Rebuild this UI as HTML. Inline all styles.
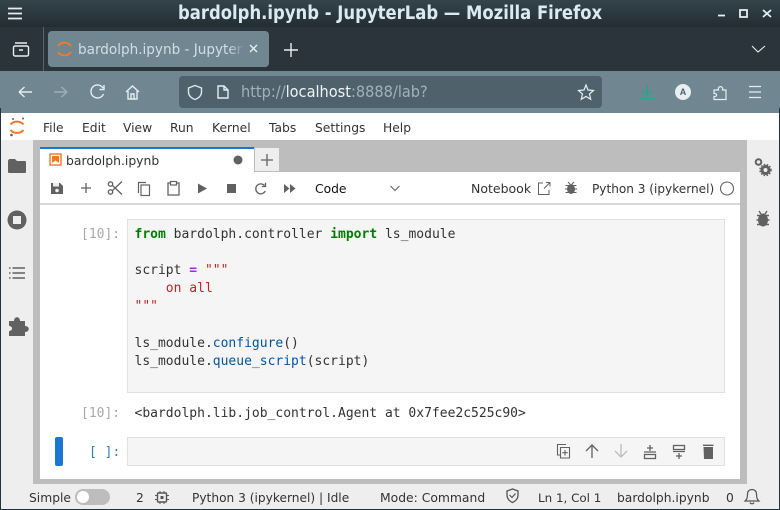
<!DOCTYPE html>
<html><head><meta charset="utf-8"><style>
html,body{margin:0;padding:0}
body{width:780px;height:510px;position:relative;overflow:hidden;background:#fff;font-family:"Liberation Sans",sans-serif}
.a{position:absolute}
.t{position:absolute;white-space:pre;line-height:18px}
.m{font-family:"DejaVu Sans Mono","Liberation Mono",monospace;font-size:13px;color:#333}
.u{font-size:12.3px;color:#333;font-family:"DejaVu Sans",sans-serif;transform-origin:0 50%}
svg{position:absolute;overflow:visible}
</style></head><body>
<div class="a" style="left:0;top:0;width:780px;height:27px;background:linear-gradient(#35434b,#232d33)"></div>
<div class="a" style="left:0;top:27px;width:780px;height:44px;background:#2a343a"></div>
<div class="a" style="left:43px;top:27px;width:1px;height:44px;background:#59646a"></div>
<div class="a" style="left:0;top:71px;width:780px;height:42px;background:#708792"></div>
<div class="a" style="left:48px;top:31px;width:221px;height:36px;background:#708792;border-radius:4px"></div>
<div class="a" style="left:179px;top:76px;width:423px;height:32px;background:#4f626c;border-radius:4px"></div>
<svg style="left:0;top:0" width="780" height="110" fill="none" stroke="#e6edf0" stroke-width="1.4">
<path d="M8 8.500H22M8 13.500H22M8 18.500H22" stroke-width="1.800"/>
<rect x="13.500" y="46" width="15" height="10" rx="1.500"/><path d="M15 43H27M19 50H23"/>
<path d="M58 46a8 8 0 0 1 13 0" stroke="#f37726" stroke-width="2"/><path d="M58 52a8 8 0 0 0 13 0" stroke="#f37726" stroke-width="2"/>
<path d="M250 45L257 52M257 45L250 52"/>
<path d="M284 50H298M291 43V57"/>
<path d="M752 46L758 52L765 46" stroke-width="1.100"/>
<path d="M19 92H32M19 92L24.500 87M19 92L24.500 97"/>
<path d="M54 92H67M67 92L61.500 87M67 92L61.500 97" stroke="#9eafb7"/>
<path d="M103 88A6.500 6.500 0 1 0 103.500 94M104 85V89.500H99.500"/>
<path d="M126 92L132.500 86L139 92M128 91V99H137V91M131 99V94H134V99"/>
<path d="M188.500 88L195 85.500L201.500 88V92C201.500 96 198 98.500 195 99.500C192 98.500 188.500 96 188.500 92Z" stroke="#dfe6e9"/>
<path d="M218 86H224L228 90V98H218ZM224 86V90H228"/>
<path d="M586 85L588 90L593.500 90.500L589.500 94L590.700 99.300L586 96.500L581.300 99.300L582.500 94L578.500 90.500L584 90Z" stroke-width="1.200"/>
<path d="M714 90H718.500C717 85.500 724 85.500 722.500 90H726V99.500H714V96.500C717.500 97 717.500 93 714 93.500Z" stroke-width="1.200"/>
<path d="M749 86.500H761M749 92H761M749 97.500H761" stroke-width="1.200"/>
<path d="M718 15.500H725" stroke-width="1.800"/>
<rect x="740" y="10" width="7" height="7" stroke-width="1.800"/>
<path d="M763 10L771 17M771 10L763 17" stroke-width="1.800"/>
<path d="M640.500 98.500H653.500M647 84V95.500M642 90.500L647 95.500L652 90.500" stroke="#1fa98d" stroke-width="1.400"/>
</svg>
<div class="a" style="left:675px;top:84px;width:16px;height:16px;border-radius:50%;background:#e8eef1;color:#4f626c;font:bold 9px/16px 'Liberation Sans',sans-serif;text-align:center">A</div>
<div class="t" style="left:178px;top:2px;font:bold 18.7px/24px 'DejaVu Sans',sans-serif;color:#dbe9f2;transform:scaleX(.88);transform-origin:0 0">bardolph.ipynb - JupyterLab — Mozilla Firefox</div>
<div class="t" style="left:78px;top:41px;font:14px/18px 'DejaVu Sans',sans-serif;color:#d4dde2;width:170px;overflow:hidden;transform:scaleX(.97);transform-origin:0 0">bardolph.ipynb - Jupyter</div>
<div class="a" style="left:228px;top:40px;width:17px;height:20px;background:linear-gradient(90deg,rgba(112,135,146,0),#708792)"></div>
<div class="t" style="left:241px;top:83px;font:16px/18px 'DejaVu Sans',sans-serif;color:#a3b1b8;transform:scaleX(.91);transform-origin:0 0">http://<span style="color:#eef3f5">localhost</span>:8888/lab?</div>

<div class="a" style="left:0;top:113px;width:780px;height:397px;background:#eee"></div>
<div class="a" style="left:0;top:113px;width:780px;height:27px;background:#fff"></div>
<div class="a" style="left:33px;top:140px;width:714px;height:344px;background:#bdbdbd"></div>
<div class="a" style="left:747px;top:141px;width:33px;height:343px;background:#eee"></div>
<div class="a" style="left:0;top:484px;width:780px;height:26px;background:#eee"></div>
<div class="a" style="left:0;top:108px;width:1px;height:402px;background:#1f3341"></div>
<div class="a" style="left:779px;top:108px;width:1px;height:402px;background:#1f3341"></div>
<div class="a" style="left:0;top:509px;width:780px;height:1px;background:#1f3341"></div>
<div class="a" style="left:40px;top:147px;width:214px;height:25px;background:#fff;border-top:2px solid #1976d2;box-sizing:border-box"></div>
<div class="a" style="left:255px;top:148px;width:24px;height:24px;background:#eee;border-bottom:1px solid #bdbdbd;box-sizing:border-box"></div>
<div class="a" style="left:40px;top:172px;width:700px;height:307px;background:#fff"></div>
<div class="a" style="left:40px;top:203px;width:700px;height:2px;background:#d8d8d8"></div>
<div class="a" style="left:127px;top:219px;width:598px;height:174px;box-sizing:border-box;background:#f5f5f5;border:1px solid #e0e0e0"></div>
<div class="a" style="left:127px;top:437px;width:598px;height:29px;box-sizing:border-box;background:#f5f5f5;border:1px solid #e0e0e0"></div>
<div class="a" style="left:55px;top:437px;width:8px;height:29px;border-radius:2px;background:#1976d2"></div>

<svg style="left:0;top:110px" width="780" height="400" fill="none" stroke="#616161">
<path d="M10.500 14.500A8 7 0 0 1 23.500 14.500M10.500 20A8 7 0 0 0 23.500 20" stroke="#f37726" stroke-width="2"/><circle cx="23" cy="8.500" r="1" fill="#616161" stroke="none"/><circle cx="11.500" cy="25" r="1.300" fill="#616161" stroke="none"/><circle cx="13" cy="9" r="1" fill="#616161" stroke="none"/>
<rect x="50" y="44" width="11" height="11" stroke="#f37726" stroke-width="1.400" fill="#fff"/><path d="M52 46H59V53L55.500 50.500L52 53Z" fill="#f37726" stroke="none"/>
<circle cx="238" cy="50" r="4.500" fill="#616161" stroke="none"/>
<path d="M261 50H273M267 44V56" stroke-width="1.300"/>
<path d="M8 51C8 50 9 49 10 49H15L17 51H25C26 51 26 52 26 53V62C26 63 25 63 24 63H10C9 63 8 63 8 62Z" fill="#616161" stroke="none"/>
<circle cx="17" cy="110" r="9.500" fill="#616161" stroke="none"/><rect x="13" y="106" width="8" height="8" fill="#eee" stroke="none"/>
<path d="M12.500 158H25M12.500 163H25M12.500 168H25M9 158H10.500M9 163H10.500M9 168H10.500" stroke-width="1.500"/>
<path d="M9 211H14C14 206 20 206 20 211H25V216C30 216 30 222 25 222V226H9V221C13 221 13 216 9 216Z" fill="#616161" stroke="none"/>
<path d="M51 73H60L63 76V84H51Z" fill="#616161" stroke="none"/><rect x="53" y="73" width="6" height="3.500" fill="#eee" stroke="none"/><circle cx="57" cy="80.500" r="1.800" fill="#eee" stroke="none"/>
<path d="M81 78H91M86 73V83" stroke-width="1.300"/>
<path d="M112.500 75.500L122 84.500M112.500 80.500L122 71.500" stroke-width="1.300"/><circle cx="110.500" cy="74" r="2.200" stroke-width="1.300"/><circle cx="110.500" cy="82" r="2.200" stroke-width="1.300"/>
<path d="M138.500 83V72.500H146" stroke-width="1.200"/><rect x="141" y="75" width="8.500" height="10.500" stroke-width="1.200"/>
<path d="M170 73H168V85H179V73H177" stroke-width="1.300"/><rect x="170.500" y="71.500" width="6" height="3.500" stroke-width="1.200"/>
<path d="M198 73.500L207 78.500L198 83.500Z" fill="#616161" stroke="none"/>
<rect x="227" y="74" width="9" height="9" fill="#616161" stroke="none"/>
<path d="M264.500 75.500A5 5 0 1 0 265.300 81M265.500 72.800V76.500H261.800" stroke-width="1.300"/>
<path d="M284 74L289.500 78.500L284 83ZM290 74L295.500 78.500L290 83Z" fill="#616161" stroke="none"/>
<path d="M390.500 76L395 80.500L399.500 76" stroke-width="1.100"/>
<path d="M543 73H538.500V84.500H549V80M544 78.500L550 72.500M546 72.500H550V76.500" stroke-width="1"/>
<ellipse cx="571" cy="79" rx="4" ry="5" fill="#616161" stroke="none"/><path d="M565.500 75.500H576.500M565 79H577M565.500 82.500H576.500M568 72L570 74M574 72L572 74" stroke-width="1.100"/>
<circle cx="727" cy="78.500" r="6.500" stroke-width="1.100"/>
<circle cx="758.500" cy="52" r="2.800" stroke-width="2"/><circle cx="765.500" cy="60" r="3.500" stroke-width="3"/><circle cx="765.500" cy="60" r="5.500" stroke-width="1.500" stroke-dasharray="1.500 1.500"/>
<ellipse cx="763" cy="110" rx="5" ry="6.500" fill="#616161" stroke="none"/><path d="M757 105.500H769M756.500 110H769.500M757 114.500H769M759 101L761 104M767 101L765 104" stroke-width="1.400"/>
<path d="M566 334.500H557.500V345H560M560.500 337.500H569.500V348H560.500ZM565 340V345.500M562.300 342.700H567.700" stroke-width="1.100"/>
<path d="M592 348V335M586 341L592 335L598 341" stroke-width="1.300"/>
<path d="M621 334V347M615 341L621 347L627 341" stroke="#bdbdbd" stroke-width="1.300"/>
<path d="M650 335V341M647 338H653M644 342H656" stroke-width="1.300"/><rect x="644.500" y="344.500" width="11" height="4" stroke-width="1.300"/>
<rect x="673.500" y="335.500" width="11" height="4" stroke-width="1.300"/><path d="M679 343V349M676 346H682M673 341.500H685" stroke-width="1.300"/>
<path d="M703.500 337H713V349H704Z" fill="#616161" stroke="none"/><path d="M703 335.300H713.500" stroke-width="1.400"/>
<path d="M507 381L512.500 379L518 381V385C518 389 515 391.500 512.500 392.500C510 391.500 507 389 507 385Z" stroke="#555" stroke-width="1.300"/><path d="M509.500 385L512 387.500L515.500 383.500" stroke="#555" stroke-width="1.200"/>
<rect x="157.500" y="383" width="9" height="9" rx="1" stroke="#555" stroke-width="1.400"/><rect x="160.500" y="386" width="3" height="3" fill="#555" stroke="none"/><path d="M155 385.500H157M155 389.500H157M167 385.500H169M167 389.500H169M160 381V383M164 381V383M160 392V394M164 392V394" stroke="#555" stroke-width="1"/>
<path d="M745 391C747 389 747.500 388 747.500 384C747.500 378 756.500 378 756.500 384C756.500 388 757 389 759 391ZM750 392.500A2.200 2.200 0 0 0 754 392.500" stroke="#555" stroke-width="1.200"/>
</svg>
<div class="a" style="left:75px;top:489px;width:35px;height:16px;border-radius:8px;background:#bdbdbd"></div>
<div class="a" style="left:77px;top:491px;width:12px;height:12px;border-radius:50%;background:#fff"></div>

<div class="t u" style="left:43px;top:119px">File</div>
<div class="t u" style="left:82px;top:119px">Edit</div>
<div class="t u" style="left:123px;top:119px">View</div>
<div class="t u" style="left:170px;top:119px">Run</div>
<div class="t u" style="left:212px;top:119px">Kernel</div>
<div class="t u" style="left:269px;top:119px">Tabs</div>
<div class="t u" style="left:315px;top:119px">Settings</div>
<div class="t u" style="left:383px;top:119px">Help</div>
<div class="t u" style="left:66px;top:152px;font-size:12.400px">bardolph.ipynb</div>
<div class="t u" style="left:315px;top:180px;color:#111">Code</div>
<div class="t u" style="left:471px;top:180px;font-size:12.500px">Notebook</div>
<div class="t u" style="left:592px;top:180px;font-size:12.100px">Python 3 (ipykernel)</div>
<div class="t m" style="left:81px;top:226px;color:#a9a9a9">[10]:</div>
<div class="t m" style="left:81px;top:405px;color:#a9a9a9">[10]:</div>
<div class="t m" style="left:89px;top:444px;color:#307fc1">[ ]:</div>
<div class="t m" style="left:134.500px;top:226px;line-height:18px"><b style="color:#008000">from</b> bardolph.controller <b style="color:#008000">import</b> ls_module</div>
<div class="t m" style="left:134.500px;top:262px;line-height:18px">script <b style="color:#aa22ff">=</b> <span style="color:#c42424">"""</span>
<span style="color:#c42424">    on all
"""</span></div>
<div class="t m" style="left:134.500px;top:335px;line-height:18px">ls_module.<span style="color:#0055aa">configure</span>()
ls_module.<span style="color:#0055aa">queue_script</span>(script)</div>
<div class="t m" style="left:134.500px;top:405px">&lt;bardolph.lib.job_control.Agent at 0x7fee2c525c90&gt;</div>
<div class="t u" style="left:29px;top:489px">Simple</div>
<div class="t u" style="left:136px;top:489px">2</div>
<div class="t u" style="left:192px;top:489px;font-size:12.200px">Python 3 (ipykernel) | Idle</div>
<div class="t u" style="left:380px;top:489px;font-size:12.350px">Mode: Command</div>
<div class="t u" style="left:538px;top:489px;font-size:11.900px">Ln 1, Col 1</div>
<div class="t u" style="left:617px;top:489px">bardolph.ipynb</div>
<div class="t u" style="left:726px;top:489px">0</div>
</body></html>
